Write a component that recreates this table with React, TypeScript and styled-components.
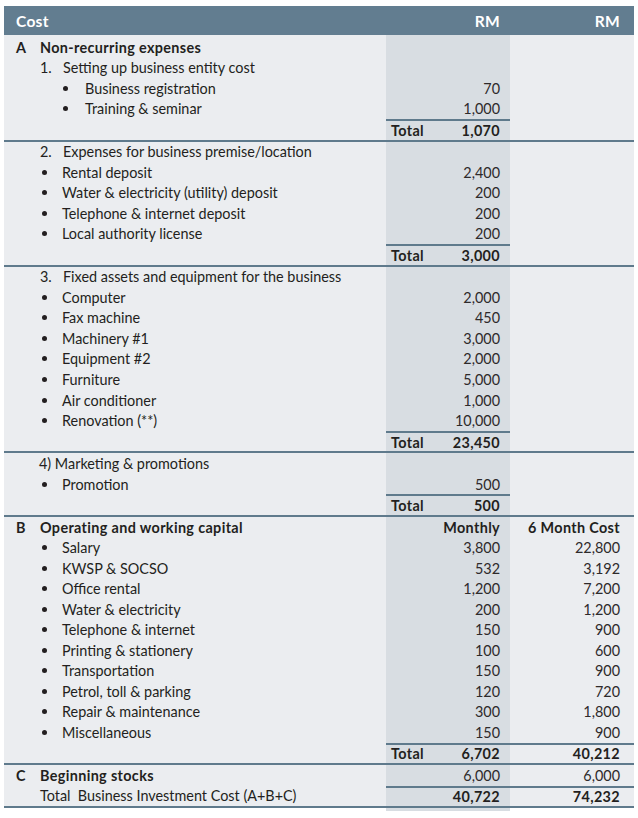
import React from "react";
import styled, { createGlobalStyle, css } from "styled-components";

const GlobalStyle = createGlobalStyle`
  html, body { margin: 0; padding: 0; background: #ffffff; }
  body { font-family: Lato, "Liberation Sans", sans-serif; color: #231f20; }
`;

const LINE = "#5f7a8c";
const GREY_COL = "#d8dde2";
const ROW_H = "20.52px";

const Table = styled.div`
  width: 630px;
  margin: 6px 4px 0 4px;
  background: #ebedf0;
  font-size: 14.4px;
`;

const Header = styled.div`
  display: grid;
  grid-template-columns: 382px 124px 124px;
  height: 29px;
  align-items: center;
  background: #627d90;
  color: #ffffff;
  font-weight: 700;
  font-size: 15.5px;
  letter-spacing: 0.3px;
`;

const HeadCell = styled.div<{ $right?: boolean; $pr?: number }>`
  padding-left: ${(p) => (p.$right ? 0 : 12)}px;
  padding-right: ${(p) => p.$pr ?? 0}px;
  text-align: ${(p) => (p.$right ? "right" : "left")};
`;

const Section = styled.div<{ $line?: boolean; $padTop?: number }>`
  border-bottom: ${(p) => (p.$line ? `2px solid ${LINE}` : "none")};
  background: linear-gradient(
    to right,
    transparent 382px,
    ${GREY_COL} 382px,
    ${GREY_COL} 506px,
    transparent 506px
  );
  padding-top: ${(p) => p.$padTop ?? 0}px;
`;

const Row = styled.div`
  display: grid;
  grid-template-columns: 382px 124px 124px;
  height: ${ROW_H};
`;

const Label = styled.div<{ $indent: number; $bold?: boolean }>`
  display: flex;
  align-items: center;
  padding-left: ${(p) => p.$indent}px;
  font-weight: ${(p) => (p.$bold ? 700 : 400)};
  letter-spacing: ${(p) => (p.$bold ? "0.35px" : "0")};
  white-space: pre;
`;

const Marker = styled.span<{ $w: number }>`
  display: inline-block;
  width: ${(p) => p.$w}px;
  flex: none;
`;

const Dot = styled.span`
  display: inline-block;
  width: 5px;
  height: 5px;
  border-radius: 50%;
  background: #231f20;
`;

const DotBox = styled.span<{ $w: number; $pl: number }>`
  display: inline-flex;
  align-items: center;
  width: ${(p) => p.$w}px;
  flex: none;
  padding-left: ${(p) => p.$pl}px;
  box-sizing: border-box;
`;

const Value = styled.div<{ $last?: boolean; $bold?: boolean; $line?: boolean }>`
  display: flex;
  align-items: center;
  justify-content: flex-end;
  padding-right: ${(p) => (p.$last ? 14 : 10)}px;
  font-weight: ${(p) => (p.$bold ? 700 : 400)};
  letter-spacing: ${(p) => (p.$bold ? "0.35px" : "0")};
  color: ${(p) => (p.$bold ? "#231f20" : "#2e2a2b")};
  box-sizing: border-box;
  ${(p) =>
    p.$line &&
    css`
      border-top: 2px solid ${LINE};
    `}
`;

const TotalCell = styled(Value)`
  justify-content: space-between;
  padding-left: 5px;
`;

const Tail = styled.div`
  width: 630px;
  margin-left: 4px;
  height: 3px;
  background: linear-gradient(
    to right,
    transparent 382px,
    ${GREY_COL} 382px,
    ${GREY_COL} 506px,
    transparent 506px
  );
`;

type V = string | undefined;

const HeadRow = ({ letter, text, v1, v2, boldValues }: { letter: string; text: string; v1?: V; v2?: V; boldValues?: boolean }) => (
  <Row>
    <Label $indent={12} $bold>
      <Marker $w={24}>{letter}</Marker>
      {text}
    </Label>
    <Value $bold={boldValues}>{v1}</Value>
    <Value $last $bold={boldValues}>{v2}</Value>
  </Row>
);

const NumRow = ({ num, text }: { num: string; text: string }) => (
  <Row>
    <Label $indent={36}>
      <Marker $w={23}>{num}</Marker>
      {text}
    </Label>
    <Value />
    <Value $last />
  </Row>
);

const PlainRow = ({ text, indent = 36, v1, v2, bold, line }: { text: string; indent?: number; v1?: V; v2?: V; bold?: boolean; line?: boolean }) => (
  <Row>
    <Label $indent={indent}>{text}</Label>
    <Value $bold={bold} $line={line}>{v1}</Value>
    <Value $last $bold={bold} $line={line}>{v2}</Value>
  </Row>
);

const BulletRow = ({ text, v1, v2, deep }: { text: string; v1?: V; v2?: V; deep?: boolean }) => (
  <Row>
    <Label $indent={deep ? 57 : 36}>
      <DotBox $w={deep ? 24 : 22} $pl={2}>
        <Dot />
      </DotBox>
      {text}
    </Label>
    <Value>{v1}</Value>
    <Value $last>{v2}</Value>
  </Row>
);

const TotalRow = ({ v1, v2, both }: { v1: string; v2?: string; both?: boolean }) => (
  <Row>
    <Label $indent={0} />
    <TotalCell $bold $line>
      <span>Total</span>
      <span>{v1}</span>
    </TotalCell>
    <Value $last $bold $line={both}>{v2}</Value>
  </Row>
);

export default function App() {
  return (
    <>
      <GlobalStyle />
      <Table>
        <Header>
          <HeadCell>Cost</HeadCell>
          <HeadCell $right $pr={10}>RM</HeadCell>
          <HeadCell $right $pr={14}>RM</HeadCell>
        </Header>

        <Section $line $padTop={2}>
          <HeadRow letter="A" text="Non-recurring expenses" />
          <NumRow num="1." text="Setting up business entity cost" />
          <BulletRow deep text="Business registration" v1="70" />
          <BulletRow deep text="Training & seminar" v1="1,000" />
          <TotalRow v1="1,070" />
        </Section>

        <Section $line>
          <NumRow num="2." text="Expenses for business premise/location" />
          <BulletRow text="Rental deposit" v1="2,400" />
          <BulletRow text="Water & electricity (utility) deposit" v1="200" />
          <BulletRow text="Telephone & internet deposit" v1="200" />
          <BulletRow text="Local authority license" v1="200" />
          <TotalRow v1="3,000" />
        </Section>

        <Section $line>
          <NumRow num="3." text="Fixed assets and equipment for the business" />
          <BulletRow text="Computer" v1="2,000" />
          <BulletRow text="Fax machine" v1="450" />
          <BulletRow text="Machinery #1" v1="3,000" />
          <BulletRow text="Equipment #2" v1="2,000" />
          <BulletRow text="Furniture" v1="5,000" />
          <BulletRow text="Air conditioner" v1="1,000" />
          <BulletRow text="Renovation (**)" v1="10,000" />
          <TotalRow v1="23,450" />
        </Section>

        <Section $line>
          <PlainRow indent={35} text="4) Marketing & promotions" />
          <BulletRow text="Promotion" v1="500" />
          <TotalRow v1="500" />
        </Section>

        <Section $line>
          <HeadRow letter="B" text="Operating and working capital" v1="Monthly" v2="6 Month Cost" boldValues />
          <BulletRow text="Salary" v1="3,800" v2="22,800" />
          <BulletRow text="KWSP & SOCSO" v1="532" v2="3,192" />
          <BulletRow text="Office rental" v1="1,200" v2="7,200" />
          <BulletRow text="Water & electricity" v1="200" v2="1,200" />
          <BulletRow text="Telephone & internet" v1="150" v2="900" />
          <BulletRow text="Printing & stationery" v1="100" v2="600" />
          <BulletRow text="Transportation" v1="150" v2="900" />
          <BulletRow text="Petrol, toll & parking" v1="120" v2="720" />
          <BulletRow text="Repair & maintenance" v1="300" v2="1,800" />
          <BulletRow text="Miscellaneous" v1="150" v2="900" />
          <TotalRow v1="6,702" v2="40,212" both />
        </Section>

        <Section $line>
          <HeadRow letter="C" text="Beginning stocks" v1="6,000" v2="6,000" />
          <PlainRow text={"Total  Business Investment Cost (A+B+C)"} v1="40,722" v2="74,232" bold line />
        </Section>
      </Table>
      <Tail />
    </>
  );
}
